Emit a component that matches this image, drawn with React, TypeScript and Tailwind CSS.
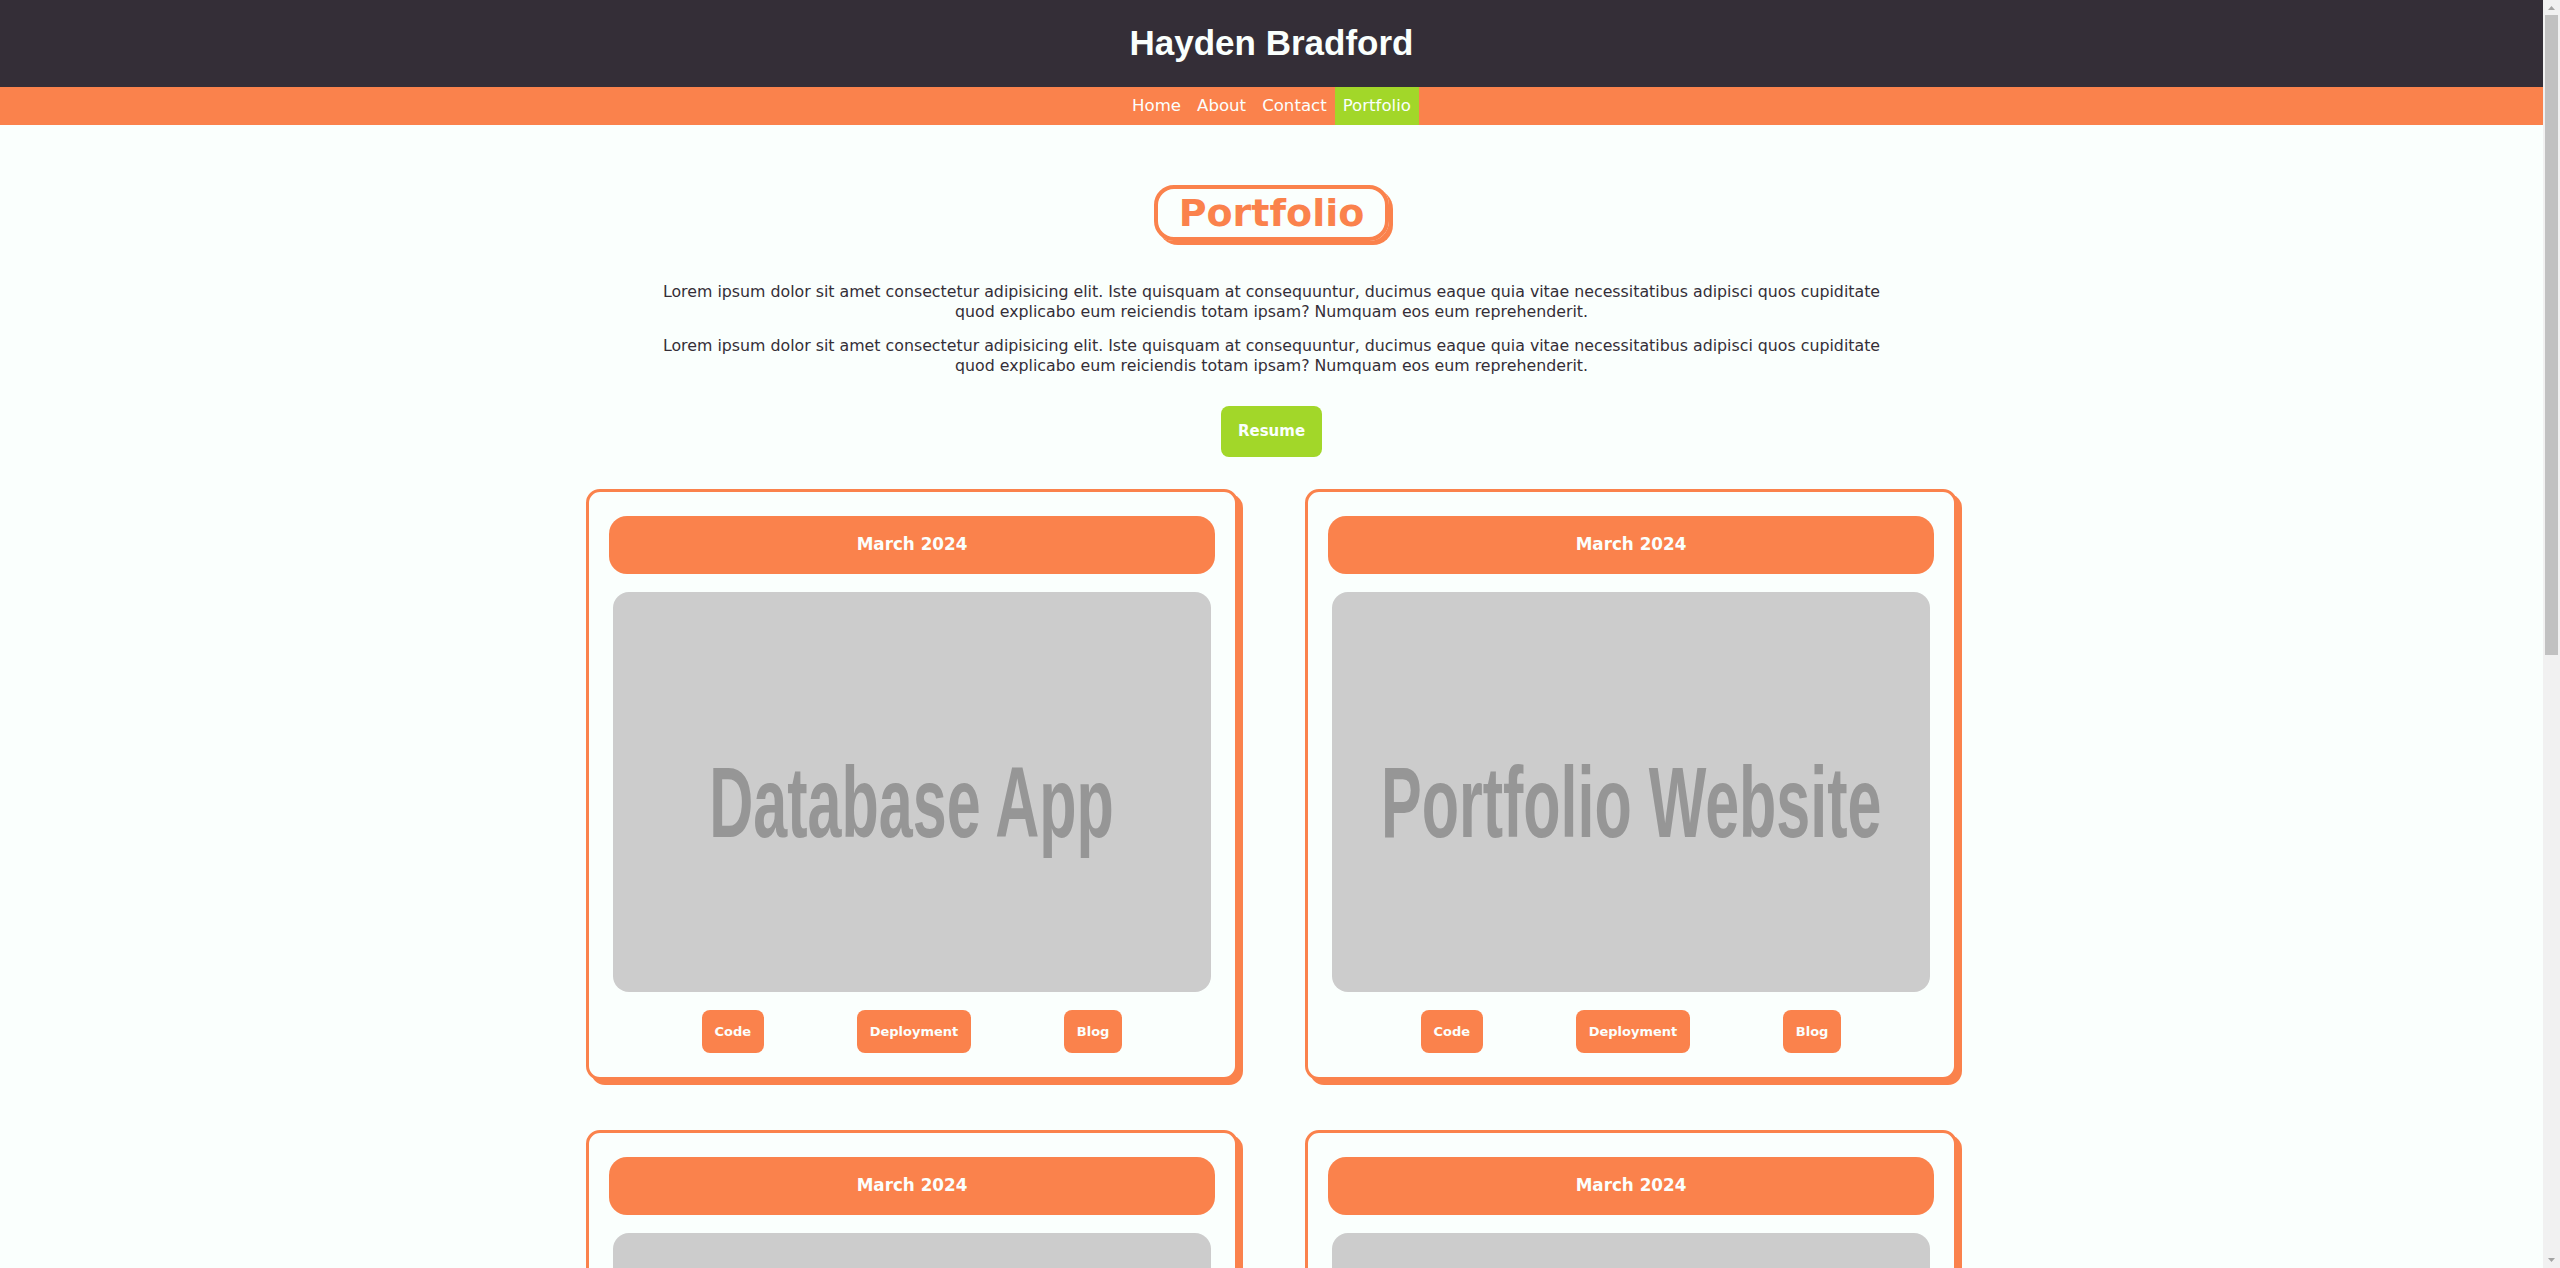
const projects = [
  { date: "March 2024", title: "Database App" },
  { date: "March 2024", title: "Portfolio Website" },
  { date: "March 2024", title: "Weather App" },
  { date: "March 2024", title: "Task Tracker" },
  { date: "March 2024", title: "Chat App" },
  { date: "March 2024", title: "Blog Platform" },
];

const lorem =
  "Lorem ipsum dolor sit amet consectetur adipisicing elit. Iste quisquam at consequuntur, ducimus eaque quia vitae necessitatibus adipisci quos cupiditate quod explicabo eum reiciendis totam ipsam? Numquam eos eum reprehenderit.";

function Header() {
  return (
    <header>
      <div className="flex h-[87px] items-center justify-center bg-[#342e37]">
        <h1 className="font-['Liberation_Sans',sans-serif] text-[35px] font-bold text-[#fafffd]">
          Hayden Bradford
        </h1>
      </div>
      <nav className="flex h-[38px] justify-center bg-[#fa824c] text-[16.6px] text-[#fafffd]">
        {["Home", "About", "Contact", "Portfolio"].map((link) => (
          <a
            key={link}
            href="#"
            className={
              link === "Portfolio"
                ? "flex items-center bg-[#a2d729] px-2"
                : "flex items-center px-2"
            }
          >
            {link}
          </a>
        ))}
      </nav>
    </header>
  );
}

function ProjectCard({ date, title }: { date: string; title: string }) {
  return (
    <div className="flex flex-col rounded-[14px] border-[3px] border-[#fa824c] bg-[#fafffd] px-[20px] pt-6 pb-6 shadow-[5px_5px_0_#fa824c]">
      <div className="flex h-[58px] items-center justify-center rounded-[18px] bg-[#fa824c] text-[16.8px] font-bold text-[#fafffd]">
        {date}
      </div>
      <div className="mx-1 mt-[18px] flex h-[400px] items-center justify-center overflow-hidden rounded-2xl bg-[#cccccc]">
        <span className="scale-x-[0.61] whitespace-nowrap pt-5 font-['Liberation_Sans',sans-serif] text-[100px] font-bold text-[#969696]">
          {title}
        </span>
      </div>
      <div className="mt-[18px] flex justify-evenly">
        {["Code", "Deployment", "Blog"].map((label) => (
          <a
            key={label}
            href="#"
            className="flex h-[43px] items-center rounded-lg bg-[#fa824c] px-[13px] text-[13px] font-bold text-[#fafffd]"
          >
            {label}
          </a>
        ))}
      </div>
    </div>
  );
}

function Scrollbar() {
  return (
    <div className="fixed top-0 right-0 flex h-screen w-[17px] flex-col items-center bg-[#f1f1f1]">
      <svg width="17" height="15" viewBox="0 0 17 15" className="shrink-0">
        <path d="M5 10h7L8.5 6z" fill="#a3a3a3" />
      </svg>
      <div className="h-[640px] w-[13px] bg-[#c1c1c1]" />
      <div className="flex-1" />
      <svg width="17" height="15" viewBox="0 0 17 15" className="shrink-0">
        <path d="M5 5h7L8.5 9z" fill="#a3a3a3" />
      </svg>
    </div>
  );
}

export default function App() {
  return (
    <div className="min-h-screen bg-[#fafffd] font-['DejaVu_Sans',sans-serif] text-[#342e37]">
      <div className="mr-[17px]">
        <Header />
        <main className="flex flex-col items-center pt-[60px] pb-20">
          <h2 className="rounded-[20px] border-4 border-[#fa824c] px-[21px] text-[38px] leading-[48px] font-bold text-[#fa824c] shadow-[4px_4px_0_#fa824c]">
            Portfolio
          </h2>
          <div className="mt-[41px] max-w-[1250px] space-y-[15px] text-center text-[15.8px] leading-[19.5px]">
            <p>{lorem}</p>
            <p>{lorem}</p>
          </div>
          <a
            href="#"
            className="mt-[31px] flex h-[51px] items-center rounded-lg bg-[#a2d729] px-[17px] text-[15px] font-bold text-[#fafffd]"
          >
            Resume
          </a>
          <div className="mt-[32px] grid grid-cols-[652px_652px] gap-x-[67px] gap-y-[50px]">
            {projects.map((p) => (
              <ProjectCard key={p.title} date={p.date} title={p.title} />
            ))}
          </div>
        </main>
      </div>
      <Scrollbar />
    </div>
  );
}
